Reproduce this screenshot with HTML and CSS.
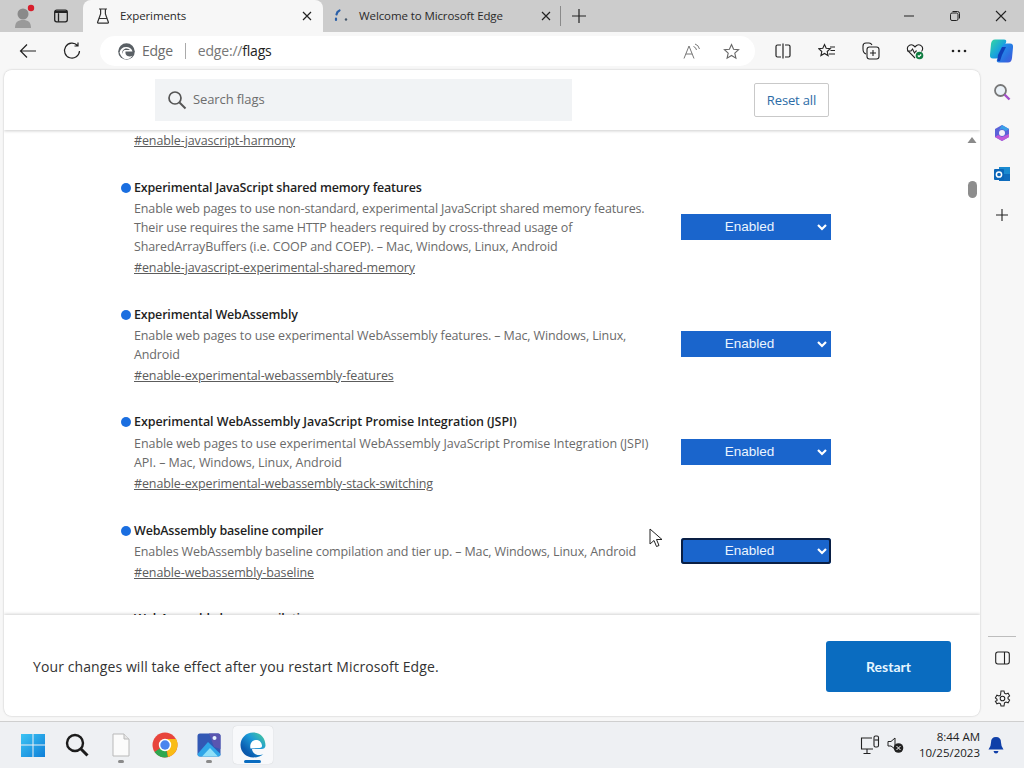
FILE: index.html
```html
<!DOCTYPE html>
<html lang="en">
<head>
<meta charset="utf-8">
<title>Experiments</title>
<link rel="stylesheet" href="styles.css">
</head>
<body>
<div class="screen">
  <header class="titlebar">
    <div class="tb-btn profile">
      <svg width="24" height="26" viewBox="0 0 24 26"><circle cx="10" cy="11" r="5.5" fill="#8a8a8a"/><path d="M2 25c0-6 3-8 8-8s8 2 8 8z" fill="#9a9a9a"/><circle cx="18" cy="5" r="3.2" fill="#d81e2c"/></svg>
    </div>
    <div class="tb-btn">
      <svg width="16" height="16" viewBox="0 0 16 16" fill="none" stroke="#222" stroke-width="1.3"><rect x="1.7" y="2.2" width="12.6" height="11.6" rx="2"/><path d="M5.5 5.2v8.6" /><path d="M2 3h12v2H2z" fill="#222" stroke="none"/></svg>
    </div>
    <div class="tab active">
      <svg class="tab-icon" width="14" height="16" viewBox="0 0 14 16" fill="none" stroke="#333" stroke-width="1.2"><path d="M3 1h8M4.6 1v5L1.6 14.2q-.3.9.7.9h9.4q1 0 .7-.9L9.4 6V1M3.4 10.5h7.2"/></svg>
      <span class="tab-title">Experiments</span>
      <svg class="tab-close" width="10" height="10" viewBox="0 0 10 10" stroke="#222" stroke-width="1.2"><path d="M1 1l8 8M9 1l-8 8"/></svg>
    </div>
    <div class="tab other">
      <svg class="tab-icon" width="16" height="16" viewBox="0 0 16 16" fill="none"><path d="M4 12V10.500M4.500 6.500q.5-3 3-4" stroke="#2a5fa8" stroke-width="2.200" stroke-linecap="round"/><circle cx="14" cy="11.500" r="1.200" fill="#45586b"/></svg>
      <span class="tab-title">Welcome to Microsoft Edge</span>
      <svg class="tab-close" width="10" height="10" viewBox="0 0 10 10" stroke="#222" stroke-width="1.2"><path d="M1 1l8 8M9 1l-8 8"/></svg>
    </div>
    <div class="tb-btn newtab">
      <svg width="16" height="16" viewBox="0 0 16 16" stroke="#222" stroke-width="1.2"><path d="M8 1v14M1 8h14"/></svg>
    </div>
    <div class="winctl">
      <div class="win-btn"><svg width="12" height="12" viewBox="0 0 12 12" stroke="#222"><path d="M1 6h10"/></svg></div>
      <div class="win-btn"><svg width="12" height="12" viewBox="0 0 12 12" fill="none" stroke="#222"><rect x="1.500" y="3" width="7.500" height="7.500" rx="1.500"/><path d="M3.500 1.500h5q2 0 2 2v5"/></svg></div>
      <div class="win-btn"><svg width="12" height="12" viewBox="0 0 12 12" stroke="#222" stroke-width="1.100"><path d="M1 1l10 10M11 1L1 11"/></svg></div>
    </div>
  </header>

  <nav class="toolbar">
    <div class="tool"><svg width="18" height="16" viewBox="0 0 18 16" fill="none" stroke="#222" stroke-width="1.200"><path d="M17 8H1.500M8 1.500L1.500 8 8 14.500"/></svg></div>
    <div class="tool"><svg width="18" height="18" viewBox="0 0 18 18" fill="none" stroke="#222" stroke-width="1.200"><path d="M14.500 3.500A7.500 7.500 0 1 0 16.500 9M15 .5v3.500h-3.500"/></svg></div>
    <div class="address">
      <svg class="edge-mono" width="17" height="17" viewBox="0 0 17 17"><circle cx="8.500" cy="8.500" r="8.300" fill="#5a6065"/><path d="M1.500 9.500Q3 3.500 9 4q4.500.5 5.500 4.500H7.500q-.5 3 2 4.500 2.500 1 5-.3-2.500 3.800-7 3.500-4-.7-6-6.700z" fill="#fff"/><path d="M4 11q-.5-4 3.500-5.500 3-.5 4.500 1.500H6.500Q4.500 8 4 11z" fill="#5a6065"/></svg>
      <span class="addr-site">Edge</span>
      <span class="addr-sep"></span>
      <span class="addr-url">edge://<b>flags</b></span>
      <span class="addr-spacer"></span>
      <svg class="addr-icon" width="18" height="17" viewBox="0 0 18 17" fill="none" stroke="#777" stroke-width="1"><path d="M1 15.500L6 3l5 12.500M2.800 11h6.400M10.500 3.500q2.500.8 3 3.500M12 1q3.500 1 4.500 5"/></svg>
      <svg class="addr-icon star" width="17" height="17" viewBox="0 0 17 17" fill="none" stroke="#666" stroke-width="1.100"><path d="M8.500 1.500l2.100 4.700 5 .5-3.800 3.400 1.100 5-4.400-2.600-4.400 2.600 1.100-5L1.400 6.700l5-.5z"/></svg>
    </div>
    <div class="tool"><svg width="16" height="16" viewBox="0 0 16 16" fill="none" stroke="#222" stroke-width="1.200"><path d="M6 2H2.500Q1 2 1 3.500v9Q1 14 2.500 14H6M10 2h3.500Q15 2 15 3.500v9q0 1.500-1.500 1.500H10M8 .5v15"/></svg></div>
    <div class="tool"><svg width="18" height="16" viewBox="0 0 18 16" fill="none" stroke="#222" stroke-width="1.100"><path d="M6.500 1.500l1.700 3.800 4.100.4-3.100 2.800.9 4.100-3.600-2.100-3.600 2.100.9-4.100L.7 5.700l4.100-.4zM12 4h5M12.500 7.500H17M11 11h6"/></svg></div>
    <div class="tool"><svg width="18" height="18" viewBox="0 0 18 18" fill="none" stroke="#222" stroke-width="1.100"><path d="M4 12Q1 11 1 7V4q0-3 3-3h3q2 0 3 2"/><rect x="5" y="5" width="12" height="12" rx="2.500"/><path d="M11 8v6M8 11h6"/></svg></div>
    <div class="tool"><svg width="18" height="17" viewBox="0 0 18 17" fill="none" stroke="#222" stroke-width="1.100"><path d="M9 15L2.500 8.500Q.500 6 2 3.500 4.500.5 7.500 2.500L9 4l1.500-1.500q3-2 5.500 1 1.500 2.500-.5 5M1 8h4l1.500-2 2 4L10 8h1"/><circle cx="13.500" cy="12.500" r="3.800" fill="#107c41" stroke="none"/><path d="M11.800 12.500l1.200 1.200 2.200-2.200" stroke="#fff"/></svg></div>
    <div class="tool"><svg width="16" height="4" viewBox="0 0 16 4" fill="#222"><circle cx="2" cy="2" r="1.300"/><circle cx="8" cy="2" r="1.300"/><circle cx="14" cy="2" r="1.300"/></svg></div>
    <div class="tool copilot"><svg width="25" height="24" viewBox="0 0 25 24"><defs><linearGradient id="cpa" x1="0" y1="0" x2="1" y2="1"><stop offset="0" stop-color="#35d8a0"/><stop offset=".55" stop-color="#18a4dc"/><stop offset="1" stop-color="#1c64d8"/></linearGradient><linearGradient id="cpb" x1="0" y1="0" x2="1" y2="1"><stop offset="0" stop-color="#18a8f0"/><stop offset=".7" stop-color="#2f6be0"/><stop offset="1" stop-color="#4a58dc"/></linearGradient></defs><path d="M6 .5h9q3 0 2 3L12 16q-1.500 3.500-5 3.500H4Q.5 19.500 1 15.500L2 5Q2.500.5 6 .5z" fill="url(#cpa)"/><path d="M19 23.500h-9q-3 0-2-3L13 8q1.500-3.500 5-3.500h3q3.500 0 3 4L23 19q-.5 4.500-4 4.500z" fill="url(#cpb)"/><path d="M9 16l4-8h4l-4 8-2 6H8.500z" fill="#0f3fb8"/></svg></div>
  </nav>

  <div class="workspace">
    <main class="card">
      <div class="flags-head">
        <div class="search">
          <svg width="20" height="20" viewBox="0 0 20 20" fill="none" stroke="#555" stroke-width="1.700"><circle cx="8" cy="8" r="6"/><path d="M12.500 12.500L18.500 18.500" stroke-width="2"/></svg>
          <span>Search flags</span>
        </div>
        <button class="reset">Reset all</button>
      </div>
      <div class="flags-scroll">
        <div class="flags-list">
          <article class="flag first">
            <div class="flag-text"><a class="flag-link">#enable-javascript-harmony</a></div>
            <div class="select"></div>
          </article>
          <article class="flag lines3">
            <div class="flag-text">
              <h3 class="flag-name">Experimental JavaScript shared memory features</h3>
              <p class="flag-desc">Enable web pages to use non-standard, experimental JavaScript shared memory features.<br>Their use requires the same HTTP headers required by cross-thread usage of<br>SharedArrayBuffers (i.e. COOP and COEP). – Mac, Windows, Linux, Android</p>
              <a class="flag-link">#enable-javascript-experimental-shared-memory</a>
            </div>
            <div class="select"><span>Enabled</span><svg width="10" height="7" viewBox="0 0 10 7" fill="none" stroke="#fff" stroke-width="2.200"><path d="M1 1l4 4 4-4"/></svg></div>
          </article>
          <article class="flag lines2">
            <div class="flag-text">
              <h3 class="flag-name">Experimental WebAssembly</h3>
              <p class="flag-desc">Enable web pages to use experimental WebAssembly features. – Mac, Windows, Linux,<br>Android</p>
              <a class="flag-link">#enable-experimental-webassembly-features</a>
            </div>
            <div class="select"><span>Enabled</span><svg width="10" height="7" viewBox="0 0 10 7" fill="none" stroke="#fff" stroke-width="2.200"><path d="M1 1l4 4 4-4"/></svg></div>
          </article>
          <article class="flag lines2">
            <div class="flag-text">
              <h3 class="flag-name wide">Experimental WebAssembly JavaScript Promise Integration (JSPI)</h3>
              <p class="flag-desc wide">Enable web pages to use experimental WebAssembly JavaScript Promise Integration (JSPI)<br>API. – Mac, Windows, Linux, Android</p>
              <a class="flag-link">#enable-experimental-webassembly-stack-switching</a>
            </div>
            <div class="select"><span>Enabled</span><svg width="10" height="7" viewBox="0 0 10 7" fill="none" stroke="#fff" stroke-width="2.200"><path d="M1 1l4 4 4-4"/></svg></div>
          </article>
          <article class="flag lines1">
            <div class="flag-text">
              <h3 class="flag-name">WebAssembly baseline compiler</h3>
              <p class="flag-desc">Enables WebAssembly baseline compilation and tier up. – Mac, Windows, Linux, Android</p>
              <a class="flag-link">#enable-webassembly-baseline</a>
            </div>
            <div class="select focused"><span>Enabled</span><svg width="10" height="7" viewBox="0 0 10 7" fill="none" stroke="#fff" stroke-width="2.200"><path d="M1 1l4 4 4-4"/></svg></div>
          </article>
          <article class="flag lines1 peek">
            <div class="flag-text">
              <h3 class="flag-name nodot">WebAssembly lazy compilation</h3>
            </div>
          </article>
        </div>
        <div class="scrollbar">
          <svg width="10" height="8" viewBox="0 0 10 8" fill="#8a8a8a"><path d="M5 1l4.500 6H.5z"/></svg>
          <span class="thumb"></span>
        </div>
      </div>
      <footer class="flags-foot">
        <span>Your changes will take effect after you restart Microsoft Edge.</span>
        <button class="restart">Restart</button>
      </footer>
      <svg class="cursor" width="14" height="20" viewBox="0 0 14 20" fill="#fff" stroke="#222" stroke-width="1"><path d="M1 1v15l4-3.500 2.500 6 2.500-1-2.500-6H13z"/></svg>
    </main>

    <aside class="sidebar">
      <div class="side-top">
        <div class="side-btn"><svg width="18" height="18" viewBox="0 0 18 18" fill="none"><circle cx="7.500" cy="7.500" r="5.500" stroke="#777" stroke-width="1.800" fill="#eaf1f7"/><path d="M11.500 11.500L16.500 16.500" stroke="#a24fc9" stroke-width="2.400"/></svg></div>
        <div class="side-btn"><svg width="18" height="18" viewBox="0 0 18 18"><path d="M9 1l7 4v8l-7 4-7-4V5z" fill="#5b62d8"/><path d="M9 1l7 4-3 2-4-2-3 1z" fill="#3aa0e8"/><path d="M2 13l3-2 4 2 7-3v3l-7 4z" fill="#c05ad8"/><circle cx="9" cy="9" r="3" fill="#f2f2f8"/></svg></div>
        <div class="side-btn"><svg width="18" height="18" viewBox="0 0 18 18"><rect x="6" y="2" width="11" height="14" fill="#1a8ad0"/><rect x="6" y="9" width="11" height="7" fill="#0f6cbd"/><rect x="1" y="4" width="10" height="11" rx="1" fill="#0a66b8"/><circle cx="6" cy="9.500" r="2.600" fill="none" stroke="#fff" stroke-width="1.500"/></svg></div>
        <div class="side-btn"><svg width="14" height="14" viewBox="0 0 14 14" stroke="#222" stroke-width="1.100"><path d="M7 1v12M1 7h12"/></svg></div>
      </div>
      <div class="side-bottom">
        <div class="side-rule"></div>
        <div class="side-btn"><svg width="15" height="14" viewBox="0 0 15 14" fill="none" stroke="#222" stroke-width="1.100"><rect x=".7" y="1" width="13.600" height="12" rx="2.200"/><path d="M9.500 1v12"/></svg></div>
        <div class="side-btn"><svg width="17" height="17" viewBox="0 0 17 17" fill="none" stroke="#222" stroke-width="1.050"><circle cx="8.500" cy="8.500" r="2.300"/><path d="M7 1h3l.5 2.200 1.500.8 2.100-.8 1.500 2.600-1.600 1.500v1.400l1.600 1.500-1.500 2.600-2.100-.8-1.500.8L10 16H7l-.5-2.200-1.500-.8-2.100.8-1.500-2.600L3 10.700V9.300L1.400 7.800l1.500-2.600 2.100.8 1.500-.8z"/></svg></div>
      </div>
    </aside>
  </div>

  <div class="taskbar">
    <div class="task-apps">
      <div class="app"><svg width="24" height="24" viewBox="0 0 24 24"><defs><linearGradient id="win" x1="0" y1="0" x2="1" y2="1"><stop offset="0" stop-color="#3cc4f4"/><stop offset="1" stop-color="#0f7fd8"/></linearGradient></defs><path d="M0 1h11.500v10.500H0zM12.500 1H24v10.500H12.500zM0 12.500h11.500V24H0zM12.500 12.500H24V24H12.500z" fill="url(#win)"/></svg></div>
      <div class="app"><svg width="24" height="24" viewBox="0 0 24 24" fill="none" stroke="#1c1c1c"><circle cx="10" cy="10" r="8" stroke-width="2.400"/><path d="M16 16l6.500 6.500" stroke-width="3"/></svg></div>
      <div class="app running"><svg width="20" height="24" viewBox="0 0 20 24"><path d="M2 1h11l5 5v17H2z" fill="#fbfbfb" stroke="#b9b9b9"/><path d="M13 1v5h5" fill="#e6e6e6" stroke="#b9b9b9"/></svg></div>
      <div class="app"><svg width="26" height="26" viewBox="0 0 26 26"><circle cx="13" cy="13" r="12.500" fill="#e8453c"/><path d="M13 13L2.500 20A12.500 12.500 0 0 0 16 25z" fill="#2fa84f"/><path d="M13 7h11.100A12.500 12.500 0 0 1 16 25z" fill="#f9bc15"/><circle cx="13" cy="13" r="6.200" fill="#fff"/><circle cx="13" cy="13" r="4.700" fill="#4a85ee"/></svg></div>
      <div class="app running"><svg width="24" height="24" viewBox="0 0 24 24"><rect x=".5" y=".5" width="23" height="23" rx="2.500" fill="#3258b4"/><path d="M12 .5h9q2.500 0 2.500 2.500v13L17 14z" fill="#5a55b0"/><circle cx="17.500" cy="5" r="2" fill="#e6f2ff"/><path d="M.5 21L11 9l12.500 12q0 2.500-2.500 2.500H3q-2.500 0-2.500-2.500z" fill="#2fa6e8"/><path d="M5 23.500L13 15l8 8.500z" fill="#8fe0f8"/></svg></div>
      <div class="app current"><svg width="26" height="26" viewBox="0 0 26 26"><defs><linearGradient id="edg" x1="1" y1="0" x2="0" y2="1"><stop offset="0" stop-color="#4fd090"/><stop offset=".4" stop-color="#1c9ad8"/><stop offset=".75" stop-color="#0a5cb0"/><stop offset="1" stop-color="#0a4f9c"/></linearGradient></defs><path d="M13 .5C21 .5 25.500 6.500 25.500 13.500c0 2.500-2 3.500-4 3.500H12c.2 3.500 3 6 7 6 1.800 0 3.200-.4 4.500-1-2.500 2.500-6 3.500-10 3.500C6 25.500.5 20 .5 13 .5 6 6 .5 13 .5z" fill="url(#edg)"/><path d="M10.500 16.500c-1-4 1-8 5-8.500 3-.3 6 1.500 6.500 5.500.1 1.500-.8 2.500-2.500 2.500z" fill="#fff"/></svg></div>
    </div>
    <div class="tray">
      <svg width="20" height="20" viewBox="0 0 20 20" fill="none" stroke="#222" stroke-width="1.100"><path d="M12 3H1.500v11H13M7 14v4M3.500 18.500h7"/><rect x="14" y="1" width="4.500" height="11" rx="1.500"/><path d="M14.500 5h3.500"/></svg>
      <svg class="mute" width="18" height="18" viewBox="0 0 18 18"><path d="M9 2v11L5 10H2V5.500h3z" fill="none" stroke="#222"/><circle cx="12.500" cy="12" r="4.800" fill="#222"/><path d="M10.500 10l4 4M14.500 10l-4 4" stroke="#fff"/></svg>
      <div class="clock"><span>8:44 AM</span><span>10/25/2023</span></div>
      <svg class="bell" width="16" height="18" viewBox="0 0 16 18" fill="#0f3fa8"><path d="M8 1q5 0 5 5.500 0 4 2.500 7H.5Q3 10.500 3 6.500 3 1 8 1zM5.500 15h5q-.5 2.500-2.500 2.500T5.500 15z"/></svg>
    </div>
  </div>
</div>
</body>
</html>
```
FILE: styles.css
```css
* { box-sizing: border-box; }
html, body { margin: 0; padding: 0; }
body { width: 1024px; height: 768px; overflow: hidden; font-family: "Open Sans", "Noto Sans", sans-serif; color: #222; }
.screen { width: 1024px; height: 768px; display: flex; flex-direction: column; background: #f7f7f7; }

.titlebar { height: 32px; flex: none; display: flex; align-items: stretch; background: #cccccc; padding-left: 6px; }
.tb-btn { width: 38px; display: flex; align-items: center; justify-content: center; }
.profile { width: 33px; justify-content: flex-end; padding-right: 2px; align-items: flex-start; padding-top: 3px; }
.tb-btn.profile + .tb-btn { width: 44px; }
.tab { width: 240px; display: flex; align-items: center; font-size: 11.5px; letter-spacing: -.1px; }
.tab.active { background: #f7f7f7; border-radius: 8px 8px 0 0; padding: 0 11px 0 13px; }
.tab.other { width: 238px; border-right: 1px solid #8a8a8a; padding: 0 9px 0 9px; height: 20px; margin-top: 6px; }
.tab.other .tab-icon { margin-right: 11px; }
.tab.active .tab-icon { margin-right: 10px; }
.tab-title { flex: 1; white-space: nowrap; color: #2a2a2a; margin-bottom: 2px; }
.newtab { width: 36px; }
.winctl { margin-left: auto; display: flex; }
.win-btn { width: 46px; display: flex; align-items: center; justify-content: center; }

.toolbar { height: 38px; flex: none; display: flex; align-items: center; padding-left: 6px; background: #f7f7f7; }
.tool { width: 44px; height: 36px; flex: none; display: flex; align-items: center; justify-content: center; }
.address { width: 655px; height: 30px; margin: 0 6px; background: #fff; border-radius: 15px; display: flex; align-items: center; padding: 0 15px 0 18px; font-size: 14px; }
.edge-mono { flex: none; }
.addr-site { margin: 0 0 1px 7px; color: #6c6c6c; letter-spacing: -.25px; }
.addr-sep { width: 1px; height: 16px; background: #aaa; margin: 0 12px 0 12px; }
.addr-url { color: #777; letter-spacing: -.2px; margin-bottom: 1px; }
.addr-url b { font-weight: 400; color: #222; }
.addr-spacer { flex: 1; }
.addr-icon { flex: none; }
.addr-icon.star { margin-left: 22px; }
.copilot { width: 43px; padding-right: 2px; }

.workspace { flex: 1; min-height: 0; display: flex; }
.card { position: relative; width: 976px; margin-left: 4px; height: 646px; display: flex; flex-direction: column; background: #fff; border-radius: 8px; box-shadow: 0 0 2px rgba(0,0,0,.25); overflow: hidden; }
.flags-head { height: 60px; flex: none; display: flex; align-items: center; padding-left: 151px; background: #fff; box-shadow: 0 1px 3px rgba(0,0,0,.2); position: relative; z-index: 2; }
.search { width: 417px; height: 42px; background: #f1f3f5; display: flex; align-items: center; gap: 6px; padding-left: 12px; font-size: 13px; letter-spacing: -.1px; color: #6d6d6d; }
.search span { margin-bottom: 2px; }
.reset { margin: 0 0 1px 182px; width: 75px; height: 34px; padding: 0; background: #fff; border: 1px solid #c9c9c9; border-radius: 2px; font: 13px "Open Sans", sans-serif; letter-spacing: -.15px; color: #2c6ca6; }

.flags-scroll { flex: 1; min-height: 0; overflow: hidden; position: relative; }
.flags-list { margin-top: -26px; padding-left: 117px; }
.flag { display: flex; align-items: center; position: relative; width: 710px; }
.flag-text { flex: 1; min-width: 0; padding: 2px 0 0 13px; }
.first { height: 59.5px; align-items: flex-start; }
.first .flag-text { padding-top: 27px; }
.lines3 { height: 127px; }
.lines2 { height: 107.5px; }
.lines1 { height: 90px; }
.peek { align-items: flex-start; }
.peek .flag-text { padding-top: 14px; }
.flag-name { position: relative; margin: 0 0 2px; font-size: 12.5px; line-height: 18px; font-weight: 600; color: #1f1f1f; letter-spacing: -.18px; white-space: nowrap; }
.flag-name.wide { letter-spacing: -.08px; margin-bottom: 3px; }
.flag-name::before { content: ""; position: absolute; left: -13px; top: 4px; width: 10px; height: 10px; border-radius: 50%; background: #1a6ee0; }
.flag-name.nodot::before { display: none; }
.flag-desc { margin: 0 0 2px; font-size: 12.5px; line-height: 19px; color: #6a6a6a; letter-spacing: -.12px; white-space: nowrap; }
.flag-desc.wide { letter-spacing: -.06px; }
.flag-link { display: block; font-size: 12.5px; line-height: 19px; color: #5c5c5c; text-decoration: underline; letter-spacing: -.11px; white-space: nowrap; }
.select { flex: none; width: 150px; height: 26px; background: #1a65cc; color: #eaf4ff; display: flex; align-items: center; position: relative; font: 13.500px/26px "Liberation Sans", Arial, sans-serif; }
.select span { width: 137px; text-align: center; }
.select svg { position: absolute; right: 4px; top: 10px; }
.select.focused { outline: 2px solid #0a1f44; outline-offset: -2px; border-radius: 3px; }

.scrollbar { position: absolute; right: 3px; top: 6px; width: 10px; display: flex; flex-direction: column; align-items: center; gap: 37px; }
.thumb { width: 9px; height: 17px; background: #8d8d8d; border-radius: 5px; }

.flags-foot { height: 101px; flex: none; display: flex; align-items: center; justify-content: space-between; padding: 2px 29px 0 29px; background: #fff; box-shadow: 0 -1px 3px rgba(0,0,0,.18); position: relative; z-index: 2; font-size: 14px; letter-spacing: .1px; color: #333; }
.restart { width: 125px; height: 51px; padding: 0; border: 0; border-radius: 3px; background: #0a6cc0; color: #e6f6ff; font: 700 14px Lato, sans-serif; }
.cursor { position: absolute; left: 645px; top: 458px; z-index: 3; }

.sidebar { flex: 1; display: flex; flex-direction: column; justify-content: space-between; }
.side-top { padding-top: 1px; }
.side-bottom { padding-bottom: 3px; }
.side-btn { height: 41px; display: flex; align-items: center; justify-content: center; }
.side-bottom .side-btn { height: 40px; }
.side-rule { height: 1px; margin: 0 8px 1px; background: #bdbdbd; }

.taskbar { height: 47px; flex: none; background: #eef0f3; border-top: 1px solid #cfcfcf; display: flex; align-items: center; justify-content: space-between; padding: 0 0 1px 11px; }
.task-apps { display: flex; }
.app { width: 44px; height: 38px; display: flex; align-items: center; justify-content: center; position: relative; }
.app.running::after { content: ""; position: absolute; bottom: 1px; left: 19px; width: 6px; height: 3px; border-radius: 2px; background: #8a8a8a; }
.app.current { background: #f8f9fb; border-radius: 4px; box-shadow: 0 0 1px rgba(0,0,0,.2); width: 40px; margin-left: 2px; }
.app.current::after { content: ""; position: absolute; bottom: 1px; left: 11px; width: 17px; height: 3px; border-radius: 2px; background: #0a6cc0; }
.tray { display: flex; align-items: center; padding-right: 20px; }
.mute { margin-left: 6px; }
.clock { width: 76px; display: flex; flex-direction: column; align-items: flex-end; font-size: 11.5px; line-height: 16px; color: #222; }
.bell { margin-left: 8px; }
```
